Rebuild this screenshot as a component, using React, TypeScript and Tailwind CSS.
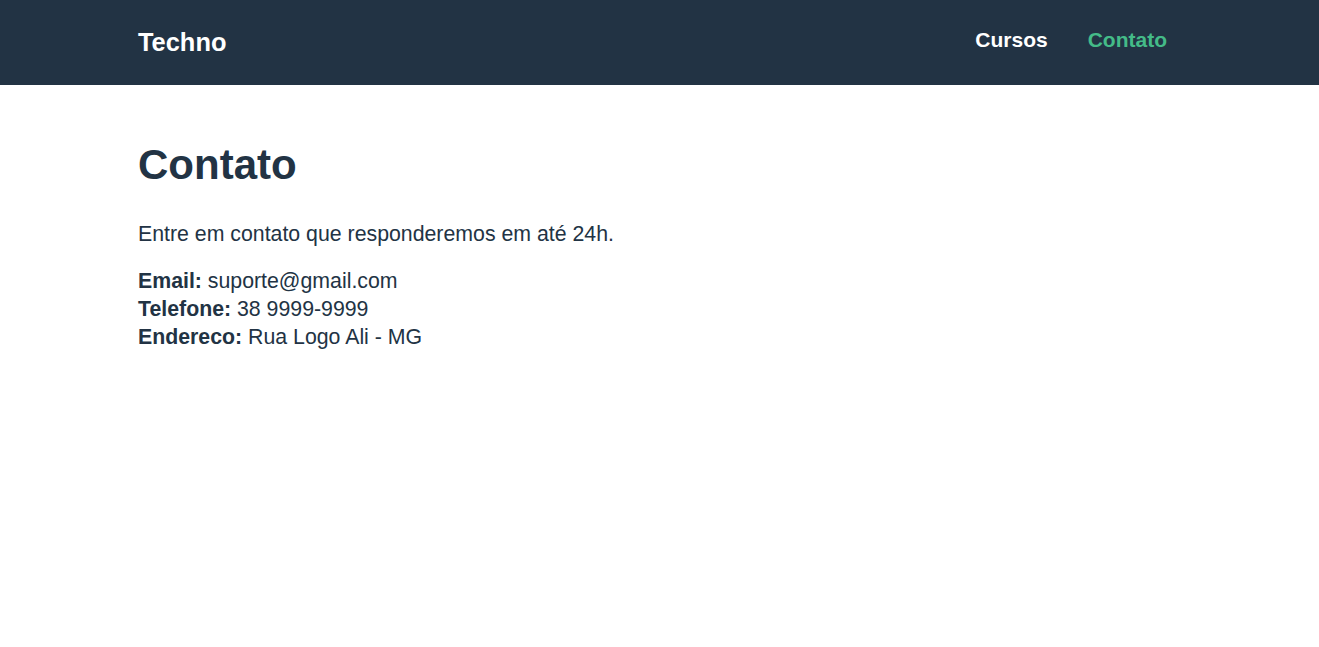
export default function App() {
  return (
    <div className="min-h-screen bg-white font-['Liberation_Sans',Arial,sans-serif] text-[#223344]">
      {/* Header */}
      <header className="bg-[#223344]">
        <div className="mx-auto flex h-[85px] max-w-[1043px] items-center justify-between">
          <a className="text-[25.4px] font-bold leading-none text-white">Techno</a>
          <nav className="mb-[7px] mr-[14px] flex items-center gap-10 text-[21px] font-bold leading-none">
            <a className="text-white">Cursos</a>
            <a className="text-[#44bb88]">Contato</a>
          </nav>
        </div>
      </header>

      {/* Conteudo */}
      <main className="mx-auto max-w-[1043px] pt-[56px]">
        <h1 className="mb-[31px] text-[42px] font-bold leading-[48px]">Contato</h1>
        <p className="mb-[19px] text-[21.3px] leading-[28px]">
          Entre em contato que responderemos em até 24h.
        </p>
        <p className="text-[21.3px] leading-[28px]">
          <b>Email:</b> suporte@gmail.com
          <br />
          <b>Telefone:</b> 38 9999-9999
          <br />
          <b>Endereco:</b> Rua Logo Ali - MG
        </p>
      </main>
    </div>
  );
}
